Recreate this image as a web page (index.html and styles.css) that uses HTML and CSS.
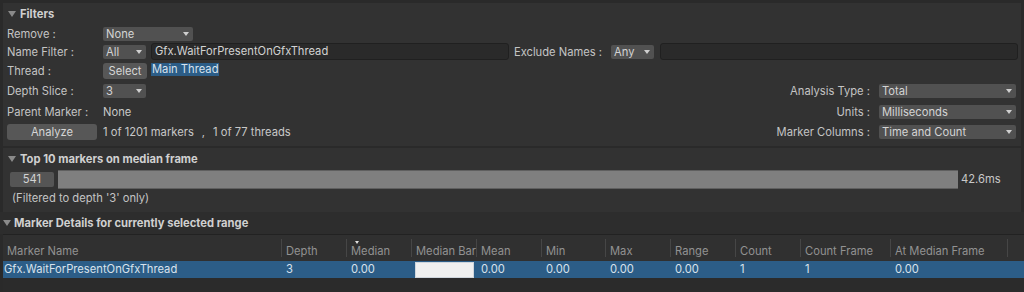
FILE: index.html
```html
<!DOCTYPE html>
<html>
<head>
<meta charset="utf-8">
<link rel="stylesheet" href="styles.css">
</head>
<body>
<div class="page">
  <section class="box filters">
    <div class="title"><span class="tri"></span>Filters</div>
    <div class="row">
      <span class="lbl">Remove :</span>
      <div class="dd w90">None<span class="arrow"></span></div>
    </div>
    <div class="row">
      <span class="lbl">Name Filter :</span>
      <div class="dd w43">All<span class="arrow"></span></div>
      <div class="field">Gfx.WaitForPresentOnGfxThread</div>
      <span class="lbl-inline">Exclude Names :</span>
      <div class="dd w43 any">Any<span class="arrow"></span></div>
      <div class="field"></div>
    </div>
    <div class="row">
      <span class="lbl">Thread :</span>
      <span class="btn select">Select</span>
      <span class="selected-text">Main Thread</span>
    </div>
    <div class="row">
      <span class="lbl">Depth Slice :</span>
      <div class="dd w43">3<span class="arrow"></span></div>
      <span class="spacer"></span>
      <span class="rlbl">Analysis Type :</span>
      <div class="dd wide">Total<span class="arrow"></span></div>
    </div>
    <div class="row">
      <span class="lbl">Parent Marker :</span>
      <span class="val">None</span>
      <span class="spacer"></span>
      <span class="rlbl">Units :</span>
      <div class="dd wide">Milliseconds<span class="arrow"></span></div>
    </div>
    <div class="row">
      <span class="btn analyze">Analyze</span>
      <span class="val">1 of 1201 markers</span><span class="val comma">,</span><span class="val">1 of 77 threads</span>
      <span class="spacer"></span>
      <span class="rlbl">Marker Columns :</span>
      <div class="dd wide">Time and Count<span class="arrow"></span></div>
    </div>
  </section>

  <section class="box top10">
    <div class="title"><span class="tri"></span>Top 10 markers on median frame</div>
    <div class="barrow">
      <span class="count">541</span>
      <div class="bar" style="width:900px"></div>
      <span class="ms">42.6ms</span>
    </div>
    <div class="note">(Filtered to depth '3' only)</div>
  </section>

  <div class="title details-title"><span class="tri"></span>Marker Details for currently selected range</div>

  <div class="table">
    <div class="thead">
      <div class="th">Marker Name</div>
      <div class="th">Depth</div>
      <div class="th sorted">Median<span class="sort"></span></div>
      <div class="th">Median Bar</div>
      <div class="th">Mean</div>
      <div class="th">Min</div>
      <div class="th">Max</div>
      <div class="th">Range</div>
      <div class="th">Count</div>
      <div class="th">Count Frame</div>
      <div class="th">At Median Frame</div>
      <div class="th last"></div>
    </div>
    <div class="tr selected">
      <div class="td first">Gfx.WaitForPresentOnGfxThread</div>
      <div class="td">3</div>
      <div class="td">0.00</div>
      <div class="td barcell"><div class="mbar"></div></div>
      <div class="td">0.00</div>
      <div class="td">0.00</div>
      <div class="td">0.00</div>
      <div class="td">0.00</div>
      <div class="td">1</div>
      <div class="td">1</div>
      <div class="td">0.00</div>
      <div class="td"></div>
    </div>
  </div>
</div>
</body>
</html>
```

FILE: styles.css
```css
* { box-sizing: border-box; }
html, body {
  margin: 0;
  padding: 0;
  background: #2a2a2a;
  width: 1024px;
  height: 292px;
  overflow: hidden;
}
body {
  font-family: Inter, "Noto Sans", sans-serif;
  font-size: 11.2px;
  color: #c4c4c4;
}
.page {
  padding-top: 3px;
}
.box {
  background: #323232;
  margin: 0 3px;
}
.title {
  display: flex;
  align-items: center;
  font-weight: 700;
  color: #d0d0d0;
  white-space: nowrap;
}
.tri {
  display: inline-block;
  width: 0;
  height: 0;
  border-left: 4px solid transparent;
  border-right: 4px solid transparent;
  border-top: 6px solid #8a8a8a;
  margin-right: 4px;
}
.filters {
  display: grid;
  grid-template-rows: 22px 17px 19px 19px 22px 20px 20px;
  padding: 0 3px 4px 4px;
}
.filters .title { padding-left: 1px; }
.row {
  display: flex;
  align-items: center;
  white-space: nowrap;
}
.lbl {
  width: 96px;
  flex: none;
}
.val { color: #c8c8c8; }
.comma { margin: 0 8px 0 8px; }
.spacer { flex: 1; }
.rlbl { margin-right: 9px; }
.dd {
  position: relative;
  height: 14px;
  line-height: 14px;
  background: #515151;
  border-radius: 2px;
  padding-left: 3px;
  color: #d4d4d4;
  flex: none;
}
.dd .arrow {
  position: absolute;
  right: 4px;
  top: 5px;
  width: 0;
  height: 0;
  border-left: 3.5px solid transparent;
  border-right: 3.5px solid transparent;
  border-top: 4px solid #cfcfcf;
}
.w90 { width: 90px; }
.w43 { width: 43px; }
.wide { width: 137px; margin-right: 2px; }
.any { margin-left: 9px; }
.field {
  flex: 1;
  height: 17px;
  line-height: 15px;
  background: #2a2a2a;
  border: 1px solid #202020;
  border-radius: 3px;
  padding-left: 3px;
  color: #d2d2d2;
  margin-left: 5px;
}
.lbl-inline { margin-left: 5px; }
.field:last-child { margin-left: 6px; }
.btn {
  display: inline-block;
  height: 16px;
  line-height: 16px;
  background: #575757;
  border-radius: 3px;
  text-align: center;
  color: #d6d6d6;
  flex: none;
}
.select { width: 44px; }
.analyze { width: 90px; margin: 0 6px 0 0; }
.selected-text {
  margin-left: 4px;
  background: #2c5d87;
  color: #d6e2ee;
  height: 13px;
  line-height: 13px;
  padding: 0 1px;
  margin-top: -3px;
}

.top10 {
  margin-top: 2px;
  padding: 0 3px 4px 5px;
}
.top10 .title { height: 21px; }
.barrow {
  height: 20px;
  display: flex;
  align-items: center;
  padding-left: 2px;
}
.count {
  width: 44px;
  height: 15px;
  line-height: 15px;
  background: #555555;
  border-radius: 2px;
  text-align: center;
  color: #d2d2d2;
  margin-right: 4px;
}
.bar {
  height: 19px;
  background: #7f7f7f;
  border-top: 1px solid #5f5f5f;
  border-bottom: 1px solid #5f5f5f;
  margin-right: 3px;
}
.ms { color: #c8c8c8; }
.note {
  height: 19px;
  line-height: 19px;
  padding-left: 4px;
  color: #c4c4c4;
}

.details-title {
  height: 22px;
  padding-left: 3px;
  background: #2d2d2d;
}
.details-title .tri { margin-right: 3px; }

.table {
  margin-left: 3px;
  border-top: 1px solid #222222;
  background: #2b2b2b;
  height: 58px;
}
.thead, .tr {
  display: grid;
  grid-template-columns: 279px 65px 65px 65px 65px 64px 65px 65px 65px 90px 117px 1fr;
}
.thead {
  height: 26px;
  background: #303030;
}
.th {
  position: relative;
  margin-top: 4px;
  height: 18px;
  padding: 6px 0 0 4px;
  line-height: 13px;
  border-right: 1px solid #464646;
  color: #929292;
  white-space: nowrap;
  overflow: hidden;
}
.th.last { border-right: none; }
.sort {
  position: absolute;
  left: 8px;
  top: 2px;
  width: 0;
  height: 0;
  border-left: 2.5px solid transparent;
  border-right: 2.5px solid transparent;
  border-top: 3px solid #e0e0e0;
}
.tr {
  height: 17px;
  line-height: 17px;
}
.tr.selected {
  background: #2c5d87;
  color: #d8e2ec;
}
.td {
  padding-left: 4px;
  white-space: nowrap;
  overflow: hidden;
}
.td.first { padding-left: 1px; }
.barcell { padding-left: 3px; padding-top: 1px; }
.mbar {
  width: 59px;
  height: 16px;
  background: #f0f0f0;
  border: 1px solid #cfd6dd;
}
```
